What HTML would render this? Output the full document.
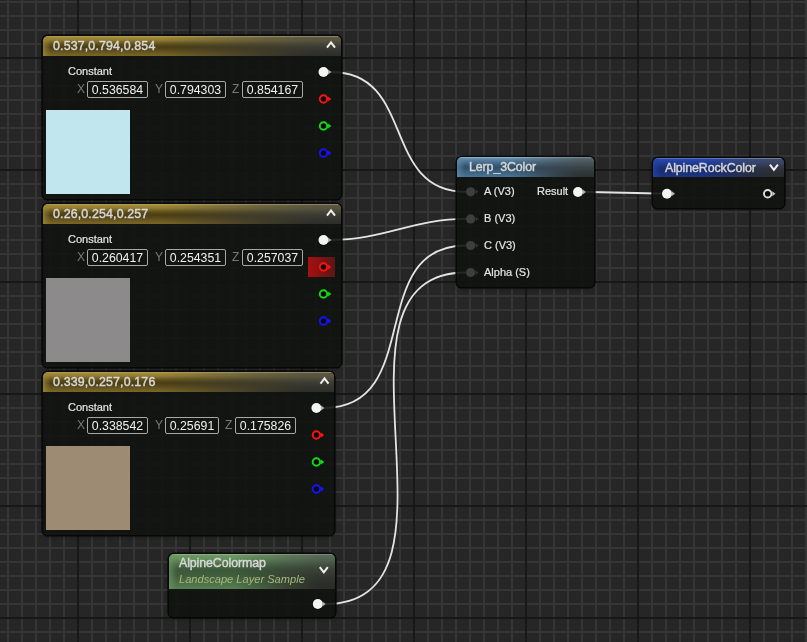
<!DOCTYPE html>
<html><head><meta charset="utf-8"><style>
html,body{margin:0;padding:0;width:807px;height:642px;overflow:hidden;background:#262626;font-family:"Liberation Sans", sans-serif;-webkit-font-smoothing:antialiased;}
.layer{position:absolute;left:0;top:0;pointer-events:none;}
.node{position:absolute;box-sizing:border-box;background:rgba(17,19,17,0.9);border-radius:5px;box-shadow:0 0 0 1.6px rgba(6,6,6,0.95), 0 1px 4px rgba(0,0,0,0.5);overflow:hidden;}
.hdr{position:relative;overflow:hidden;}
.hdr::before{content:'';position:absolute;left:0;top:0;bottom:0;width:8px;background:linear-gradient(90deg,var(--g) 0px,rgba(0,0,0,0) 8px);z-index:1;}
.hr{position:absolute;left:0;top:0;right:0;bottom:0;-webkit-mask-image:linear-gradient(90deg,rgba(0,0,0,0) 40%,rgba(0,0,0,0.75) 74%,#000 90%);}
.gold{--g:rgba(160,138,56,0.75);background:linear-gradient(180deg,#b8a66e 0px,#a08a38 1.5px,#927c30 4px,#5e4e1c 8px,#4a3e14 11px,#5a4a1a 14px,#6c5a22 17px,#7a6628 20px);}
.gold .hr{background:linear-gradient(180deg,#a09a80 0px,#5c5840 1.5px,#54523e 5px,#3e3e34 10px,#34342e 15px,#2c2e2a 20px);}
.blue1{--g:rgba(96,140,170,0.75);background:linear-gradient(180deg,#9cc0d6 0px,#6290ac 1.5px,#50789a 4px,#36566e 9px,#30506a 11px,#3e6684 16px,#4a7492 20px);}
.blue1 .hr{background:linear-gradient(180deg,#8a969c 0px,#56646c 1.5px,#4a565c 5px,#3c4448 10px,#32383a 15px,#2c3032 20px);}
.blue2{--g:rgba(40,70,168,0.75);background:linear-gradient(180deg,#6a84d0 0px,#2848a8 1.5px,#22409c 4px,#1a3078 9px,#182c70 12px,#1c3280 17px,#1e3686 20px);}
.blue2 .hr{background:linear-gradient(180deg,#9098a8 0px,#3e4a6a 1.5px,#3a4460 5px,#2e3440 10px,#2a2e34 15px,#282a2c 20px);}
.green{--g:rgba(106,146,96,0.75);background:linear-gradient(180deg,#9cbc8e 0px,#6c9864 1.5px,#648e5c 5px,#4a6c44 11px,#3c583a 16px,#405e3c 22px,#4e724a 30px,#567e50 35px);}
.green .hr{background:linear-gradient(180deg,#8a9888 0px,#5a6a58 1.5px,#50604e 6px,#3c443a 14px,#32362f 22px,#2c2e2a 30px,#2a2c28 35px);}
.t{position:absolute;white-space:nowrap;color:#dcdcdc;will-change:transform;}
.title{font-size:12.4px;font-weight:normal;color:#d8d8d8;line-height:19px;letter-spacing:-0.1px;-webkit-text-stroke:0.42px #d8d8d8;}
.num{letter-spacing:0.15px;}
.sub{font-size:11.1px;font-style:italic;color:#a8b87a;line-height:16px;}
.lbl{font-size:11px;line-height:14px;color:#e4e4e4;-webkit-text-stroke:0.2px #e4e4e4;}
.axis{font-size:12px;line-height:16px;color:#787878;}
.box{position:absolute;will-change:transform;box-sizing:border-box;height:17.3px;border:1px solid #a8a8a8;border-radius:2px;color:#f0f0f0;font-size:12.3px;line-height:16px;text-align:center;}
.sw{position:absolute;width:84px;height:84px;}
</style></head><body>
<svg class="layer" width="807" height="642"><rect x="7" y="0" width="2" height="642" fill="#353535"/><rect x="21" y="0" width="2" height="642" fill="#353535"/><rect x="35" y="0" width="2" height="642" fill="#353535"/><rect x="49" y="0" width="2" height="642" fill="#353535"/><rect x="63" y="0" width="2" height="642" fill="#353535"/><rect x="91" y="0" width="2" height="642" fill="#353535"/><rect x="105" y="0" width="2" height="642" fill="#353535"/><rect x="119" y="0" width="2" height="642" fill="#353535"/><rect x="133" y="0" width="2" height="642" fill="#353535"/><rect x="147" y="0" width="2" height="642" fill="#353535"/><rect x="161" y="0" width="2" height="642" fill="#353535"/><rect x="175" y="0" width="2" height="642" fill="#353535"/><rect x="203" y="0" width="2" height="642" fill="#353535"/><rect x="217" y="0" width="2" height="642" fill="#353535"/><rect x="231" y="0" width="2" height="642" fill="#353535"/><rect x="245" y="0" width="2" height="642" fill="#353535"/><rect x="259" y="0" width="2" height="642" fill="#353535"/><rect x="273" y="0" width="2" height="642" fill="#353535"/><rect x="287" y="0" width="2" height="642" fill="#353535"/><rect x="315" y="0" width="2" height="642" fill="#353535"/><rect x="329" y="0" width="2" height="642" fill="#353535"/><rect x="343" y="0" width="2" height="642" fill="#353535"/><rect x="357" y="0" width="2" height="642" fill="#353535"/><rect x="371" y="0" width="2" height="642" fill="#353535"/><rect x="385" y="0" width="2" height="642" fill="#353535"/><rect x="399" y="0" width="2" height="642" fill="#353535"/><rect x="427" y="0" width="2" height="642" fill="#353535"/><rect x="441" y="0" width="2" height="642" fill="#353535"/><rect x="455" y="0" width="2" height="642" fill="#353535"/><rect x="469" y="0" width="2" height="642" fill="#353535"/><rect x="483" y="0" width="2" height="642" fill="#353535"/><rect x="497" y="0" width="2" height="642" fill="#353535"/><rect x="511" y="0" width="2" height="642" fill="#353535"/><rect x="539" y="0" width="2" height="642" fill="#353535"/><rect x="553" y="0" width="2" height="642" fill="#353535"/><rect x="567" y="0" width="2" height="642" fill="#353535"/><rect x="581" y="0" width="2" height="642" fill="#353535"/><rect x="595" y="0" width="2" height="642" fill="#353535"/><rect x="609" y="0" width="2" height="642" fill="#353535"/><rect x="623" y="0" width="2" height="642" fill="#353535"/><rect x="651" y="0" width="2" height="642" fill="#353535"/><rect x="665" y="0" width="2" height="642" fill="#353535"/><rect x="679" y="0" width="2" height="642" fill="#353535"/><rect x="693" y="0" width="2" height="642" fill="#353535"/><rect x="707" y="0" width="2" height="642" fill="#353535"/><rect x="721" y="0" width="2" height="642" fill="#353535"/><rect x="735" y="0" width="2" height="642" fill="#353535"/><rect x="763" y="0" width="2" height="642" fill="#353535"/><rect x="777" y="0" width="2" height="642" fill="#353535"/><rect x="791" y="0" width="2" height="642" fill="#353535"/><rect x="805" y="0" width="2" height="642" fill="#353535"/><rect x="0" y="1" width="807" height="2" fill="#353535"/><rect x="0" y="15" width="807" height="2" fill="#353535"/><rect x="0" y="29" width="807" height="2" fill="#353535"/><rect x="0" y="43" width="807" height="2" fill="#353535"/><rect x="0" y="71" width="807" height="2" fill="#353535"/><rect x="0" y="85" width="807" height="2" fill="#353535"/><rect x="0" y="99" width="807" height="2" fill="#353535"/><rect x="0" y="113" width="807" height="2" fill="#353535"/><rect x="0" y="127" width="807" height="2" fill="#353535"/><rect x="0" y="141" width="807" height="2" fill="#353535"/><rect x="0" y="155" width="807" height="2" fill="#353535"/><rect x="0" y="183" width="807" height="2" fill="#353535"/><rect x="0" y="197" width="807" height="2" fill="#353535"/><rect x="0" y="211" width="807" height="2" fill="#353535"/><rect x="0" y="225" width="807" height="2" fill="#353535"/><rect x="0" y="239" width="807" height="2" fill="#353535"/><rect x="0" y="253" width="807" height="2" fill="#353535"/><rect x="0" y="267" width="807" height="2" fill="#353535"/><rect x="0" y="295" width="807" height="2" fill="#353535"/><rect x="0" y="309" width="807" height="2" fill="#353535"/><rect x="0" y="323" width="807" height="2" fill="#353535"/><rect x="0" y="337" width="807" height="2" fill="#353535"/><rect x="0" y="351" width="807" height="2" fill="#353535"/><rect x="0" y="365" width="807" height="2" fill="#353535"/><rect x="0" y="379" width="807" height="2" fill="#353535"/><rect x="0" y="407" width="807" height="2" fill="#353535"/><rect x="0" y="421" width="807" height="2" fill="#353535"/><rect x="0" y="435" width="807" height="2" fill="#353535"/><rect x="0" y="449" width="807" height="2" fill="#353535"/><rect x="0" y="463" width="807" height="2" fill="#353535"/><rect x="0" y="477" width="807" height="2" fill="#353535"/><rect x="0" y="491" width="807" height="2" fill="#353535"/><rect x="0" y="519" width="807" height="2" fill="#353535"/><rect x="0" y="533" width="807" height="2" fill="#353535"/><rect x="0" y="547" width="807" height="2" fill="#353535"/><rect x="0" y="561" width="807" height="2" fill="#353535"/><rect x="0" y="575" width="807" height="2" fill="#353535"/><rect x="0" y="589" width="807" height="2" fill="#353535"/><rect x="0" y="603" width="807" height="2" fill="#353535"/><rect x="0" y="631" width="807" height="2" fill="#353535"/><rect x="77" y="0" width="2" height="642" fill="#171717"/><rect x="189" y="0" width="2" height="642" fill="#171717"/><rect x="301" y="0" width="2" height="642" fill="#171717"/><rect x="413" y="0" width="2" height="642" fill="#171717"/><rect x="525" y="0" width="2" height="642" fill="#171717"/><rect x="637" y="0" width="2" height="642" fill="#171717"/><rect x="749" y="0" width="2" height="642" fill="#171717"/><rect x="0" y="57" width="807" height="2" fill="#171717"/><rect x="0" y="169" width="807" height="2" fill="#171717"/><rect x="0" y="281" width="807" height="2" fill="#171717"/><rect x="0" y="393" width="807" height="2" fill="#171717"/><rect x="0" y="505" width="807" height="2" fill="#171717"/><rect x="0" y="617" width="807" height="2" fill="#171717"/></svg>
<svg class="layer" width="807" height="642"><path d="M331.2,72 C416.0,72 381.0,191.8 465.8,191.8" stroke="#e4e4e4" stroke-width="1.8" fill="none"/><path d="M331.2,240 C383.1,240 413.9,218.9 465.8,218.9" stroke="#e4e4e4" stroke-width="1.8" fill="none"/><path d="M324.09999999999997,408 C425.5,408 364.4,245.5 465.8,245.5" stroke="#e4e4e4" stroke-width="1.8" fill="none"/><path d="M325.5,604 C482.8,604 308.5,272.5 465.8,272.5" stroke="#e4e4e4" stroke-width="1.8" fill="none"/><path d="M585.7,192 C611.7,192 636.2,193.5 662.2,193.5" stroke="#e4e4e4" stroke-width="1.8" fill="none"/></svg>
<div class="node" style="left:43px;top:36px;width:297.5px;height:163px"><div class="hdr gold" style="height:20px"><div class="hr"></div></div></div><div class="t title num" style="left:53px;top:37px">0.537,0.794,0.854</div><svg class="layer" width="807" height="642"><path d="M327.0,47.6 L331.0,42.4 L335.0,47.6" stroke="#f0f0f0" stroke-width="2" fill="none"/></svg><div class="t lbl" style="left:68px;top:63.8px">Constant</div><div class="t axis" style="left:77px;top:81px">X</div><div class="box" style="left:87px;top:80.5px;width:61px">0.536584</div><div class="t axis" style="left:155px;top:81px">Y</div><div class="box" style="left:165px;top:80.5px;width:61px">0.794303</div><div class="t axis" style="left:232px;top:81px">Z</div><div class="box" style="left:242px;top:80.5px;width:61px">0.854167</div><div class="sw" style="left:46px;top:110px;background:#c2e6ee"></div><div class="node" style="left:43px;top:204px;width:297.5px;height:163px"><div class="hdr gold" style="height:20px"><div class="hr"></div></div></div><div class="t title num" style="left:53px;top:205px">0.26,0.254,0.257</div><svg class="layer" width="807" height="642"><path d="M327.0,215.6 L331.0,210.4 L335.0,215.6" stroke="#f0f0f0" stroke-width="2" fill="none"/></svg><div class="t lbl" style="left:68px;top:231.8px">Constant</div><div class="t axis" style="left:77px;top:249px">X</div><div class="box" style="left:87px;top:248.5px;width:61px">0.260417</div><div class="t axis" style="left:155px;top:249px">Y</div><div class="box" style="left:165px;top:248.5px;width:61px">0.254351</div><div class="t axis" style="left:232px;top:249px">Z</div><div class="box" style="left:242px;top:248.5px;width:61px">0.257037</div><div class="sw" style="left:46px;top:278px;background:#8c8a8b"></div><div class="node" style="left:43px;top:372px;width:291px;height:163px"><div class="hdr gold" style="height:20px"><div class="hr"></div></div></div><div class="t title num" style="left:53px;top:373px">0.339,0.257,0.176</div><svg class="layer" width="807" height="642"><path d="M320.5,383.6 L324.5,378.4 L328.5,383.6" stroke="#f0f0f0" stroke-width="2" fill="none"/></svg><div class="t lbl" style="left:68px;top:399.8px">Constant</div><div class="t axis" style="left:77px;top:417px">X</div><div class="box" style="left:87px;top:416.5px;width:61px">0.338542</div><div class="t axis" style="left:155px;top:417px">Y</div><div class="box" style="left:165px;top:416.5px;width:54px">0.25691</div><div class="t axis" style="left:225px;top:417px">Z</div><div class="box" style="left:235px;top:416.5px;width:61px">0.175826</div><div class="sw" style="left:46px;top:446px;background:#9d8b74"></div><div style="position:absolute;left:308px;top:257px;width:27px;height:20px;background:linear-gradient(90deg,#a81010,#5a1616)"></div><div class="node" style="left:456.8px;top:157.2px;width:137.7px;height:129.8px"><div class="hdr blue1" style="height:19.8px"><div class="hr"></div></div></div><div class="t title" style="left:469px;top:158.2px">Lerp_3Color</div><div class="t lbl" style="left:484px;top:183.8px">A (V3)</div><div class="t lbl" style="left:484px;top:210.9px">B (V3)</div><div class="t lbl" style="left:484px;top:237.5px">C (V3)</div><div class="t lbl" style="left:484px;top:264.5px">Alpha (S)</div><div class="t lbl" style="left:537px;top:183.8px">Result</div><div class="node" style="left:653px;top:157.7px;width:130.5px;height:50.30000000000001px"><div class="hdr blue2" style="height:19.6px"><div class="hr"></div></div></div><div class="t title" style="left:665px;top:158.8px">AlpineRockColor</div><svg class="layer" width="807" height="642"><path d="M769.9,164.6 L773.9,169.79999999999998 L777.9,164.6" stroke="#f0f0f0" stroke-width="2" fill="none"/></svg><div class="node" style="left:169px;top:554px;width:165.60000000000002px;height:63px"><div class="hdr green" style="height:35px"><div class="hr"></div></div></div><div class="t title" style="left:179px;top:554px">AlpineColormap</div><div class="t sub" style="left:179px;top:571px">Landscape Layer Sample</div><svg class="layer" width="807" height="642"><path d="M319.8,567.1999999999999 L323.8,572.4 L327.8,567.1999999999999" stroke="#f0f0f0" stroke-width="2" fill="none"/></svg><svg class="layer" width="807" height="642"><circle cx="323.5" cy="72" r="5.6" fill="rgba(0,0,0,0.5)"/><circle cx="323.5" cy="72" r="5" fill="#f4f4f4"/><path d="M328.1,69.4 L331.5,72 L328.1,74.6 Z" fill="#b4b4b4"/><circle cx="323.5" cy="99" r="3.75" fill="rgba(6,6,6,0.8)" stroke="#ff1212" stroke-width="1.9"/><path d="M328.1,96.5 L331.3,99 L328.1,101.5 Z" fill="#ff1212"/><circle cx="323.5" cy="126" r="3.75" fill="rgba(6,6,6,0.8)" stroke="#12dd12" stroke-width="1.9"/><path d="M328.1,123.5 L331.3,126 L328.1,128.5 Z" fill="#12dd12"/><circle cx="323.5" cy="153" r="3.75" fill="rgba(6,6,6,0.8)" stroke="#1414ff" stroke-width="1.9"/><path d="M328.1,150.5 L331.3,153 L328.1,155.5 Z" fill="#1414ff"/><circle cx="323.5" cy="240" r="5.6" fill="rgba(0,0,0,0.5)"/><circle cx="323.5" cy="240" r="5" fill="#f4f4f4"/><path d="M328.1,237.4 L331.5,240 L328.1,242.6 Z" fill="#b4b4b4"/><circle cx="323.5" cy="267" r="3.75" fill="rgba(6,6,6,0.8)" stroke="#ff1212" stroke-width="1.9"/><path d="M328.1,264.5 L331.3,267 L328.1,269.5 Z" fill="#ff1212"/><circle cx="323.5" cy="294" r="3.75" fill="rgba(6,6,6,0.8)" stroke="#12dd12" stroke-width="1.9"/><path d="M328.1,291.5 L331.3,294 L328.1,296.5 Z" fill="#12dd12"/><circle cx="323.5" cy="321" r="3.75" fill="rgba(6,6,6,0.8)" stroke="#1414ff" stroke-width="1.9"/><path d="M328.1,318.5 L331.3,321 L328.1,323.5 Z" fill="#1414ff"/><circle cx="316.4" cy="408" r="5.6" fill="rgba(0,0,0,0.5)"/><circle cx="316.4" cy="408" r="5" fill="#f4f4f4"/><path d="M321.0,405.4 L324.4,408 L321.0,410.6 Z" fill="#b4b4b4"/><circle cx="316.4" cy="435" r="3.75" fill="rgba(6,6,6,0.8)" stroke="#ff1212" stroke-width="1.9"/><path d="M321.0,432.5 L324.2,435 L321.0,437.5 Z" fill="#ff1212"/><circle cx="316.4" cy="462" r="3.75" fill="rgba(6,6,6,0.8)" stroke="#12dd12" stroke-width="1.9"/><path d="M321.0,459.5 L324.2,462 L321.0,464.5 Z" fill="#12dd12"/><circle cx="316.4" cy="489" r="3.75" fill="rgba(6,6,6,0.8)" stroke="#1414ff" stroke-width="1.9"/><path d="M321.0,486.5 L324.2,489 L321.0,491.5 Z" fill="#1414ff"/><circle cx="470.6" cy="191.8" r="4.6" fill="#3e3e3e"/><path d="M475.6,189.4 L478.4,191.8 L475.6,194.20000000000002 Z" fill="#343434"/><circle cx="470.6" cy="218.9" r="4.6" fill="#3e3e3e"/><path d="M475.6,216.5 L478.4,218.9 L475.6,221.3 Z" fill="#343434"/><circle cx="470.6" cy="245.5" r="4.6" fill="#3e3e3e"/><path d="M475.6,243.1 L478.4,245.5 L475.6,247.9 Z" fill="#343434"/><circle cx="470.6" cy="272.5" r="4.6" fill="#3e3e3e"/><path d="M475.6,270.1 L478.4,272.5 L475.6,274.9 Z" fill="#343434"/><circle cx="578" cy="192" r="5.6" fill="rgba(0,0,0,0.5)"/><circle cx="578" cy="192" r="5" fill="#f4f4f4"/><path d="M582.6,189.4 L586,192 L582.6,194.6 Z" fill="#b4b4b4"/><circle cx="667" cy="193.7" r="5.6" fill="rgba(0,0,0,0.5)"/><circle cx="667" cy="193.7" r="5" fill="#f4f4f4"/><path d="M671.6,191.1 L675,193.7 L671.6,196.29999999999998 Z" fill="#b4b4b4"/><circle cx="767.7" cy="193.7" r="3.75" fill="rgba(6,6,6,0.8)" stroke="#e0e0e0" stroke-width="1.9"/><path d="M772.3000000000001,191.2 L775.5,193.7 L772.3000000000001,196.2 Z" fill="#c8c8c8"/><circle cx="317.8" cy="604" r="5.6" fill="rgba(0,0,0,0.5)"/><circle cx="317.8" cy="604" r="5" fill="#f4f4f4"/><path d="M322.40000000000003,601.4 L325.8,604 L322.40000000000003,606.6 Z" fill="#b4b4b4"/></svg></body></html>
